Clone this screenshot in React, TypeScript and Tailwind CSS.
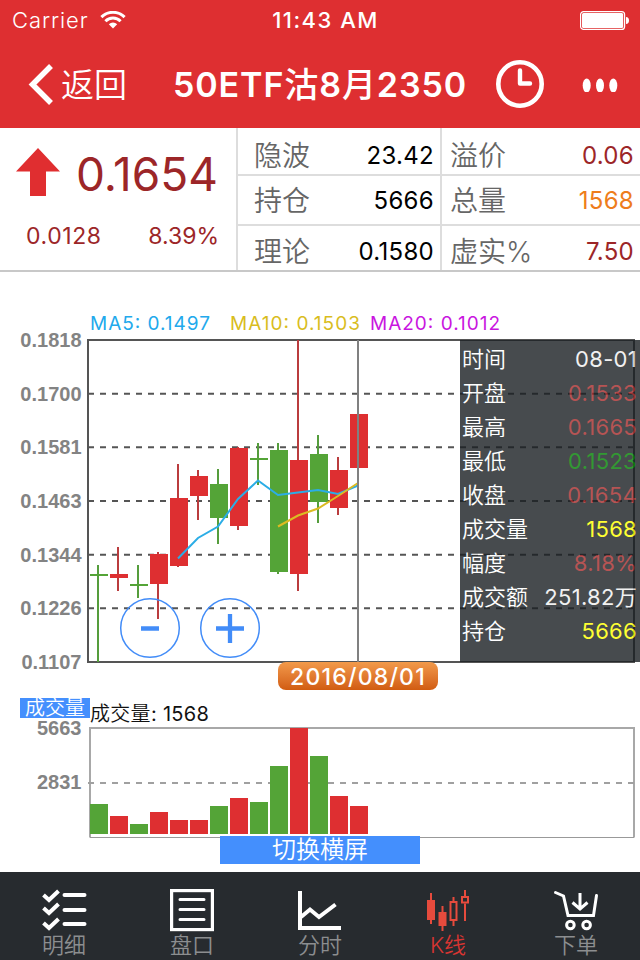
import { ReactNode } from "react";
import clsx from "clsx";

type Candle = {
    up: boolean;
    high: number;
    low: number;
    top: number;
    bottom: number;
    volTop: number;
};

// y values are in screen units, same space as the chart viewBox
const candles: Candle[] = [
    { up: false, high: 565, low: 662, top: 574, bottom: 576, volTop: 804 },
    { up: true, high: 547, low: 591, top: 574, bottom: 578, volTop: 816 },
    { up: false, high: 565, low: 598, top: 584, bottom: 586, volTop: 824 },
    { up: true, high: 552, low: 619, top: 554, bottom: 584, volTop: 812 },
    { up: true, high: 464, low: 567, top: 498, bottom: 566, volTop: 820 },
    { up: true, high: 470, low: 520, top: 476, bottom: 496, volTop: 820 },
    { up: false, high: 469, low: 544, top: 484, bottom: 518, volTop: 806 },
    { up: true, high: 447, low: 530, top: 448, bottom: 526, volTop: 798 },
    { up: false, high: 443, low: 485, top: 458, bottom: 460, volTop: 802 },
    { up: false, high: 443, low: 574, top: 450, bottom: 572, volTop: 766 },
    { up: true, high: 340, low: 591, top: 460, bottom: 574, volTop: 728 },
    { up: false, high: 435, low: 523, top: 454, bottom: 502, volTop: 756 },
    { up: true, high: 457, low: 515, top: 470, bottom: 508, volTop: 796 },
    { up: true, high: 414, low: 468, top: 414, bottom: 468, volTop: 806 },
];

const priceTicks = ["0.1818", "0.1700", "0.1581", "0.1463", "0.1344", "0.1226", "0.1107"];

const averages = [
    { text: "MA5: 0.1497", x: 90, width: 120, color: "#22a9ec" },
    { text: "MA10: 0.1503", x: 230, width: 130, color: "#d9bd1e" },
    { text: "MA20: 0.1012", x: 370, width: 130, color: "#c916e0" },
];

const details = [
    { label: "时间", value: "08-01", color: "text-[#eeeeee]" },
    { label: "开盘", value: "0.1533", color: "text-[#a52a2a]" },
    { label: "最高", value: "0.1665", color: "text-[#a52a2a]" },
    { label: "最低", value: "0.1523", color: "text-[#008000]" },
    { label: "收盘", value: "0.1654", color: "text-[#a52a2a]" },
    { label: "成交量", value: "1568", color: "text-[#ffff00]" },
    { label: "幅度", value: "8.18%", color: "text-[#a52a2a]" },
    { label: "成交额", value: "251.82万", color: "text-[#eeeeee]" },
    { label: "持仓", value: "5666", color: "text-[#ffff00]" },
];

function StatusBar() {
    return (
        <div className="grid h-10 grid-cols-3 items-center pl-3 pr-[11px] text-[22px] leading-10">
            <div className="flex items-center gap-3">
                <span className="font-[350] tracking-[0.900px]">Carrier</span>
                <svg width="26" height="18" viewBox="0 0 26 18" fill="none" stroke="white" strokeWidth="3">
                    <path d="M1.4 6.1a16.4 16.4 0 0 1 23.2 0" />
                    <path d="M5.4 10.2a10.8 10.8 0 0 1 15.2 0" />
                    <path d="M13 17.5l-4.2-4.3a6 6 0 0 1 8.4 0z" fill="white" stroke="none" />
                </svg>
            </div>
            <span className="whitespace-nowrap pl-2.5 text-center font-medium tracking-[1.500px]">11:43 AM</span>
            <svg className="justify-self-end" width="49" height="19" viewBox="0 0 49 19">
                <rect x="0.6" y="0.6" width="44" height="17.8" rx="3" fill="none" stroke="white" strokeWidth="1.2" />
                <rect x="2" y="2" width="41.2" height="15" rx="1.5" fill="white" />
                <path d="M46 6c2 0 3 1.500 3 3.500s-1 3.500-3 3.500z" fill="white" />
            </svg>
        </div>
    );
}

function NavBar() {
    return (
        <div className="flex h-[88px] items-center">
            <div className="flex w-[173px] items-center pl-7">
                <svg width="26" height="44" viewBox="28 62 26 44" fill="none" stroke="white" strokeWidth="5.500">
                    <path d="M51 66L32.500 84.500L51 103" />
                </svg>
                <span className="ml-[7px] pt-0.5 text-[33px] font-[350] leading-[44px]">返回</span>
            </div>
            <h1 className="w-[323px] whitespace-nowrap pt-0.5 text-[34px] font-semibold leading-[44px] tracking-[0.900px]">
                50ETF<span className="font-medium">沽</span>8<span className="font-medium">月</span>2350
            </h1>
            <svg width="48" height="48" viewBox="0 0 48 48" fill="none" stroke="white">
                <circle cx="24" cy="24" r="21.700" strokeWidth="4.600" />
                <path d="M24 10.500V23.500H34" strokeWidth="4.400" strokeLinecap="round" strokeLinejoin="round" />
            </svg>
            <svg className="ml-[38px]" width="36" height="16" viewBox="0 0 36 16" fill="white">
                <ellipse cx="4.700" cy="9.500" rx="4" ry="7" />
                <ellipse cx="18" cy="9.500" rx="4" ry="7" />
                <ellipse cx="31.300" cy="9.500" rx="4" ry="7" />
            </svg>
        </div>
    );
}

function Cell({ label, value, className }: { label: string; value: string; className?: string }) {
    return (
        <div className={clsx("flex items-center justify-between", className)}>
            <span className="text-[28px] font-[350] text-[#666666]">{label}</span>
            <span className="text-[24px] tracking-[0.300px]">{value}</span>
        </div>
    );
}

function Quote() {
    return (
        <section className="flex h-36 border-b-2 border-[#c8c8c8] leading-[40px]">
            <div className="w-[236px] text-[#9c2628]">
                <div className="flex h-[68px] items-end justify-between pl-4 pr-[18px]">
                    <svg width="44" height="48" viewBox="0 0 44 48" fill="#e02e30">
                        <path d="M22 0L44 23.500H30V48H14V23.500H0z" />
                    </svg>
                    <span className="text-[46px] leading-[44px]">0.1654</span>
                </div>
                <div className="flex justify-between pl-[26px] pr-[17px] pt-5 text-[23px]">
                    <span className="tracking-[0.600px]">0.0128</span>
                    <span>8.39%</span>
                </div>
            </div>
            <div className="flex w-[204px] flex-col border-l-2 border-[#dddddd] text-black">
                <Cell label="隐波" value="23.42" className="h-12 border-b-2 border-[#dddddd] pl-4 pr-1.5 pt-2.5" />
                <Cell label="持仓" value="5666" className="h-[50px] border-b-2 border-[#dddddd] pl-4 pr-1.5 pt-px" />
                <Cell label="理论" value="0.1580" className="h-11 pl-4 pr-1.5 pt-2" />
            </div>
            <div className="flex w-[200px] flex-col border-l-2 border-[#dddddd] text-[#9c2628]">
                <Cell label="溢价" value="0.06" className="h-12 border-b-2 border-[#dddddd] pl-2 pr-1.5 pt-2.5" />
                <Cell label="总量" value="1568" className="h-[50px] border-b-2 border-[#dddddd] pl-2 pr-1.5 pt-px text-[#ee7d1c]" />
                <Cell label="虚实%" value="7.50" className="h-11 pl-2 pr-1.5 pt-2" />
            </div>
        </section>
    );
}

function DetailPanel() {
    return (
        <div className="absolute left-[460px] top-[68px] h-[322px] w-[180px] bg-[#1a1f23] pl-0.5 pr-[3px] pt-0.5 text-[22px] leading-[34px] opacity-80">
            {details.map((d) => (
                <div key={d.label} className="flex h-[34px] justify-between whitespace-nowrap">
                    <span className="font-[350] text-white">{d.label}</span>
                    <span className={clsx("tracking-[0.300px]", d.color)}>{d.value}</span>
                </div>
            ))}
        </div>
    );
}

function KLineChart() {
    return (
        <section className="relative h-[426px]">
            <svg width="640" height="426" viewBox="0 272 640 426" fill="none">
                {averages.map((ma) => (
                    <text key={ma.text} x={ma.x} y="330" fontSize="19" textLength={ma.width} fill={ma.color}>
                        {ma.text}
                    </text>
                ))}
                {priceTicks.map((tick, i) => (
                    <text
                        key={tick}
                        x="81.500"
                        y={347 + i * 53.67}
                        textAnchor="end"
                        fill="#838383"
                        className="font-['Liberation_Sans'] text-[20px] font-bold"
                    >
                        {tick}
                    </text>
                ))}
                {[1, 2, 3, 4, 5].map((i) => (
                    <path key={i} d={`M88 ${340 + i * 53.67}H634`} stroke="#555555" strokeWidth="2" strokeDasharray="6 6" />
                ))}
                <rect x="88" y="340" width="546" height="322" stroke="#555555" strokeWidth="2" />
                {candles.map((c, i) => (
                    <g key={i}>
                        <path d={`M${98 + i * 20} ${c.high}V${c.low}`} stroke={c.up ? "#ba3c3e" : "#559d3c"} strokeWidth="2" />
                        <rect x={90 + i * 20} y={c.top} width="18" height={c.bottom - c.top} fill={c.up ? "#de2f31" : "#54a437"} />
                    </g>
                ))}
                <path
                    d="M178 558.500L198 538L218 526.500L238 499L258 480.500L278 495L298 492.500L318 490L338 494L358 485.500"
                    stroke="#2bade6"
                    strokeWidth="2"
                />
                <path d="M278 526.500L298 515.500L318 508.500L338 496L358 483" stroke="#dcbb22" strokeWidth="2" />
                <path d="M358 340V662" stroke="#808080" strokeWidth="2" />
                <g stroke="#428cf8">
                    <circle cx="150" cy="628" r="29.300" strokeWidth="1.500" />
                    <path d="M141 628.500H159" strokeWidth="4.500" />
                    <circle cx="230" cy="628" r="29.300" strokeWidth="1.500" />
                    <path d="M216 628.500H244M230 614V643" strokeWidth="4.300" />
                </g>
            </svg>
            <DetailPanel />
            <div className="absolute left-[278px] top-[390px] h-7 w-40 rounded-lg bg-linear-to-b from-[#f29a4a] to-[#d15c10] text-center text-[23px] font-medium leading-[30px] tracking-[1.200px] text-white">
                2016/08/01
            </div>
        </section>
    );
}

function VolumeChart() {
    return (
        <section className="flex h-[174px] flex-col">
            <div className="flex h-5 pl-5 text-[20px]">
                <span className="w-[70px] bg-[#448ffd] text-center font-[350] leading-5 text-white">成交量</span>
                <span className="leading-[32px] tracking-[0.300px] text-[#111111]">
                    <span className="font-[350]">成交量</span>: 1568
                </span>
            </div>
            <svg className="shrink-0" width="640" height="120" viewBox="0 718 640 120" fill="none">
                <path d="M90 837.500V728H634V837.500" stroke="#a8a8a8" strokeWidth="2" />
                <path d="M90 837.500H634" stroke="#999999" />
                <path d="M88 783H634" stroke="#a0a0a0" strokeWidth="2" strokeDasharray="6 6" />
                <g fill="#838383" textAnchor="end" className="font-['Liberation_Sans'] text-[20px] font-bold">
                    <text x="81.500" y="735">5663</text>
                    <text x="81.500" y="788.500">2831</text>
                </g>
                {candles.map((c, i) => (
                    <rect key={i} x={90 + i * 20} y={c.volTop} width="18" height={834 - c.volTop} fill={c.up ? "#de2f31" : "#54a437"} />
                ))}
            </svg>
            <button className="relative -mt-0.5 ml-[220px] h-7 w-[200px] bg-[#448ffd] text-[24px] font-[350] leading-7 text-white">
                切换横屏
            </button>
        </section>
    );
}

function Tab({ label, active, children }: { label: string; active?: boolean; children: ReactNode }) {
    return (
        <div className={clsx("flex flex-1 flex-col items-center pt-4", active ? "text-[#d83532]" : "text-[#8c8e90]")}>
            <svg width="48" height="44" viewBox="0 0 48 44" fill="none" stroke={active ? "#e64b3d" : "white"}>
                {children}
            </svg>
            <span className="-mt-px text-[22px] font-[350] leading-7">{label}</span>
        </div>
    );
}

function TabBar() {
    return (
        <nav className="flex h-[88px] bg-[#272b2f]">
            <Tab label="明细">
                <path d="M3.500 7L9 12L18.500 3M3.500 20L9 25L18.500 16M3.500 35L9 40L18.500 31" strokeWidth="4" />
                <path d="M24.500 7H44.500M24.500 22H44.500M24.500 36H44.500" strokeWidth="4" strokeLinecap="round" />
            </Tab>
            <Tab label="盘口">
                <rect x="3.600" y="2.600" width="40.800" height="39" strokeWidth="3.200" />
                <path d="M12 11.500H36M12 21.500H36M12 31.500H36" strokeWidth="3" strokeLinecap="round" />
            </Tab>
            <Tab label="分时">
                <path d="M4 3V40H45" strokeWidth="4" />
                <path d="M5 29L14 21.500L23 29L39.500 16.500" strokeWidth="4" />
            </Tab>
            <Tab label="K线" active>
                <path d="M7 5V36M18.500 18V43M29.500 9V13M29.500 33V38M41 2V8M41 15.500V33" strokeWidth="2" />
                <path d="M3 12H11V32H3zM14.500 24H22.500V38H14.500z" fill="#e64b3d" stroke="none" />
                <path d="M26.500 14H32.500V32H26.500zM38 9H44V14.500H38z" strokeWidth="2" />
            </Tab>
            <Tab label="下单">
                <path d="M3.500 4.500L11.500 8L16 27.500H41.500L44.500 7.500" strokeWidth="3" strokeLinecap="round" />
                <path d="M28 5V20M20.500 14.500L28 21L35.500 14.500" strokeWidth="3" />
                <circle cx="18.400" cy="37" r="3.800" strokeWidth="3" />
                <circle cx="34.600" cy="37" r="3.800" strokeWidth="3" />
            </Tab>
        </nav>
    );
}

export default function App() {
    return (
        <div className="flex h-[960px] w-[640px] flex-col overflow-hidden bg-white font-[Inter,'Noto_Sans_CJK_SC',sans-serif]">
            <header className="h-32 bg-[#de2f31] text-white">
                <StatusBar />
                <NavBar />
            </header>
            <Quote />
            <KLineChart />
            <VolumeChart />
            <TabBar />
        </div>
    );
}
